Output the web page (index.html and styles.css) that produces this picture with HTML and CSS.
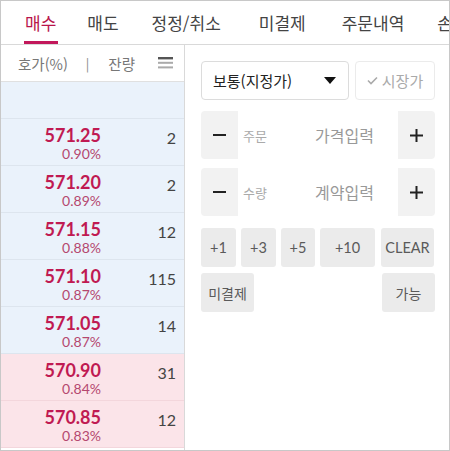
FILE: index.html
```html
<!DOCTYPE html>
<html lang="ko">
<head>
<meta charset="utf-8">
<link rel="stylesheet" href="styles.css">
</head>
<body>
<div class="app">
  <nav class="tabs">
    <div class="tab active">매수</div>
    <div class="tab">매도</div>
    <div class="tab">정정/취소</div>
    <div class="tab">미결제</div>
    <div class="tab">주문내역</div>
    <div class="tab">손익</div>
  </nav>
  <div class="main">
    <section class="book">
      <div class="book-head">
        <span class="h-label">호가(%)</span>
        <span class="h-sep">|</span>
        <span class="h-label">잔량</span>
        <svg class="menu" width="15" height="12" viewBox="0 0 15 12">
          <rect x="0" y="0" width="15" height="2.4" fill="#555"/>
          <rect x="0" y="4.8" width="15" height="2" fill="#aaa"/>
          <rect x="0" y="9.4" width="15" height="2" fill="#aaa"/>
        </svg>
      </div>
      <div class="row blue empty"></div>
      <div class="row blue"><div class="px"><b>571.25</b><span>0.90%</span></div><div class="qty">2</div></div>
      <div class="row blue"><div class="px"><b>571.20</b><span>0.89%</span></div><div class="qty">2</div></div>
      <div class="row blue"><div class="px"><b>571.15</b><span>0.88%</span></div><div class="qty">12</div></div>
      <div class="row blue"><div class="px"><b>571.10</b><span>0.87%</span></div><div class="qty">115</div></div>
      <div class="row blue"><div class="px"><b>571.05</b><span>0.87%</span></div><div class="qty">14</div></div>
      <div class="row pink"><div class="px"><b>570.90</b><span>0.84%</span></div><div class="qty">31</div></div>
      <div class="row pink"><div class="px"><b>570.85</b><span>0.83%</span></div><div class="qty">12</div></div>
    </section>
    <section class="form">
      <div class="line1">
        <div class="select"><span>보통(지정가)</span><span class="caret"></span></div>
        <div class="market">
          <svg width="11" height="9" viewBox="0 0 11 9"><path d="M1 4.5 L4 7.5 L10 1.5" fill="none" stroke="#aaa" stroke-width="1.6"/></svg>
          <span>시장가</span>
        </div>
      </div>
      <div class="stepper">
        <div class="step">
          <svg width="13" height="2" viewBox="0 0 13 2"><rect width="13" height="2" fill="#222"/></svg>
        </div>
        <div class="field"><span class="fl">주문</span><span class="ph">가격입력</span></div>
        <div class="step">
          <svg width="13" height="13" viewBox="0 0 13 13"><rect y="5.5" width="13" height="2" fill="#222"/><rect x="5.5" width="2" height="13" fill="#222"/></svg>
        </div>
      </div>
      <div class="stepper">
        <div class="step">
          <svg width="13" height="2" viewBox="0 0 13 2"><rect width="13" height="2" fill="#222"/></svg>
        </div>
        <div class="field"><span class="fl">수량</span><span class="ph">계약입력</span></div>
        <div class="step">
          <svg width="13" height="13" viewBox="0 0 13 13"><rect y="5.5" width="13" height="2" fill="#222"/><rect x="5.5" width="2" height="13" fill="#222"/></svg>
        </div>
      </div>
      <div class="btns">
        <div class="btn">+1</div>
        <div class="btn">+3</div>
        <div class="btn">+5</div>
        <div class="btn">+10</div>
        <div class="btn">CLEAR</div>
      </div>
      <div class="btns2">
        <div class="btn kr">미결제</div>
        <div class="btn kr">가능</div>
      </div>
    </section>
  </div>
</div>
</body>
</html>
```

FILE: styles.css
```css
* { box-sizing: border-box; }
html, body { margin: 0; padding: 0; background: #fff; }
body {
  font-family: "Noto Sans CJK KR", "Noto Sans", sans-serif;
  color: #333;
}
.app {
  width: 450px;
  height: 451px;
  border: 1px solid #c8c8c8;
  overflow: hidden;
  display: flex;
  flex-direction: column;
}
.tabs {
  height: 44px;
  flex: none;
  display: flex;
  align-items: stretch;
  padding-left: 6px;
  border-bottom: 1px solid #d9d9d9;
  white-space: nowrap;
  overflow: hidden;
}
.tab {
  position: relative;
  font-size: 17px;
  line-height: 44px;
  color: #444;
  flex: none;
}
.tab:nth-child(1) { padding: 0 15px 0 18px; }
.tab:nth-child(2) { padding: 0 16px 0 16px; }
.tab:nth-child(3) { padding: 0 18px 0 17px; }
.tab:nth-child(4) { padding: 0 18px 0 20px; }
.tab:nth-child(5) { padding: 0 16px 0 18px; }
.tab:nth-child(6) { padding: 0 0 0 17px; }
.tab.active { color: #b8154b; }
.tab.active::after {
  content: "";
  position: absolute;
  left: 17px;
  right: 13px;
  bottom: 0;
  height: 3px;
  background: #c2185b;
}
.main {
  flex: 1;
  display: flex;
  min-height: 0;
}
.book {
  width: 184px;
  flex: none;
  border-right: 1px solid #d9d9d9;
  display: flex;
  flex-direction: column;
}
.book-head {
  height: 37px;
  flex: none;
  display: flex;
  align-items: center;
  padding-left: 17px;
  font-size: 14.5px;
  color: #777;
  border-bottom: 1px solid #e0e0e0;
}
.h-sep { margin: 0 19px 0 18px; color: #888; font-size: 13px; }
.menu { margin-left: 23px; }
.row {
  height: 47px;
  flex: none;
  display: flex;
  align-items: center;
  border-bottom: 1px solid #dde5ee;
  font-family: Lato, "Open Sans", sans-serif;
}
.row.empty { height: 37px; }
.blue { background: #eaf2fb; }
.pink { background: #fbe4e9; border-bottom-color: #f3d6dc; }
.px {
  width: 100px;
  display: flex;
  flex-direction: column;
  align-items: flex-end;
  line-height: 1;
  padding-top: 2px;
}
.px b {
  font-size: 18px;
  font-weight: 700;
  color: #c01a52;
}
.px span {
  font-size: 14px;
  color: #b5486f;
  margin-top: 3px;
}
.qty {
  width: 75px;
  text-align: right;
  font-size: 16px;
  color: #444;
  padding-bottom: 10px;
}
.form {
  flex: 1;
  padding: 16px 14px 0 16px;
  display: flex;
  flex-direction: column;
}
.line1 {
  display: flex;
  gap: 6px;
  height: 39px;
  margin-bottom: 11px;
}
.select {
  width: 148px;
  border: 1px solid #dcdcdc;
  border-radius: 4px;
  display: flex;
  align-items: center;
  justify-content: space-between;
  padding: 0 12px 0 11px;
  font-size: 15px;
  color: #222;
}
.caret {
  width: 0; height: 0;
  border-left: 6px solid transparent;
  border-right: 6px solid transparent;
  border-top: 7px solid #111;
}
.market {
  flex: 1;
  border: 1px solid #ebebeb;
  border-radius: 4px;
  display: flex;
  align-items: center;
  justify-content: center;
  gap: 4px;
  font-size: 15px;
  color: #aaa;
}
.stepper {
  height: 48px;
  display: flex;
  background: #f2f2f2;
  border-radius: 4px;
  margin-bottom: 9px;
  overflow: hidden;
}
.step {
  width: 37px;
  display: flex;
  align-items: center;
  justify-content: center;
}
.field {
  flex: 1;
  background: #fff;
  display: flex;
  align-items: center;
  padding-left: 5px;
}
.fl { font-size: 13px; color: #aaa; width: 72px; }
.ph { font-size: 16px; color: #999; }
.btns {
  display: flex;
  gap: 5px;
  margin-top: 3px;
  height: 39px;
}
.btn {
  background: #ebebeb;
  border-radius: 3px;
  display: flex;
  align-items: center;
  justify-content: center;
  font-family: Lato, "Noto Sans CJK KR", sans-serif;
  font-size: 14.5px;
  color: #5a5a5a;
}
.btns .btn { width: 35px; }
.btns .btn:nth-child(3) { width: 34px; }
.btns .btn:nth-child(4) { width: 55px; }
.btns .btn:nth-child(5) { width: 53px; margin-left: 1px; }
.btns2 {
  display: flex;
  justify-content: space-between;
  margin-top: 6px;
  height: 39px;
}
.btns2 .btn { width: 53px; font-family: "Noto Sans CJK KR", sans-serif; font-size: 14px; }
```
